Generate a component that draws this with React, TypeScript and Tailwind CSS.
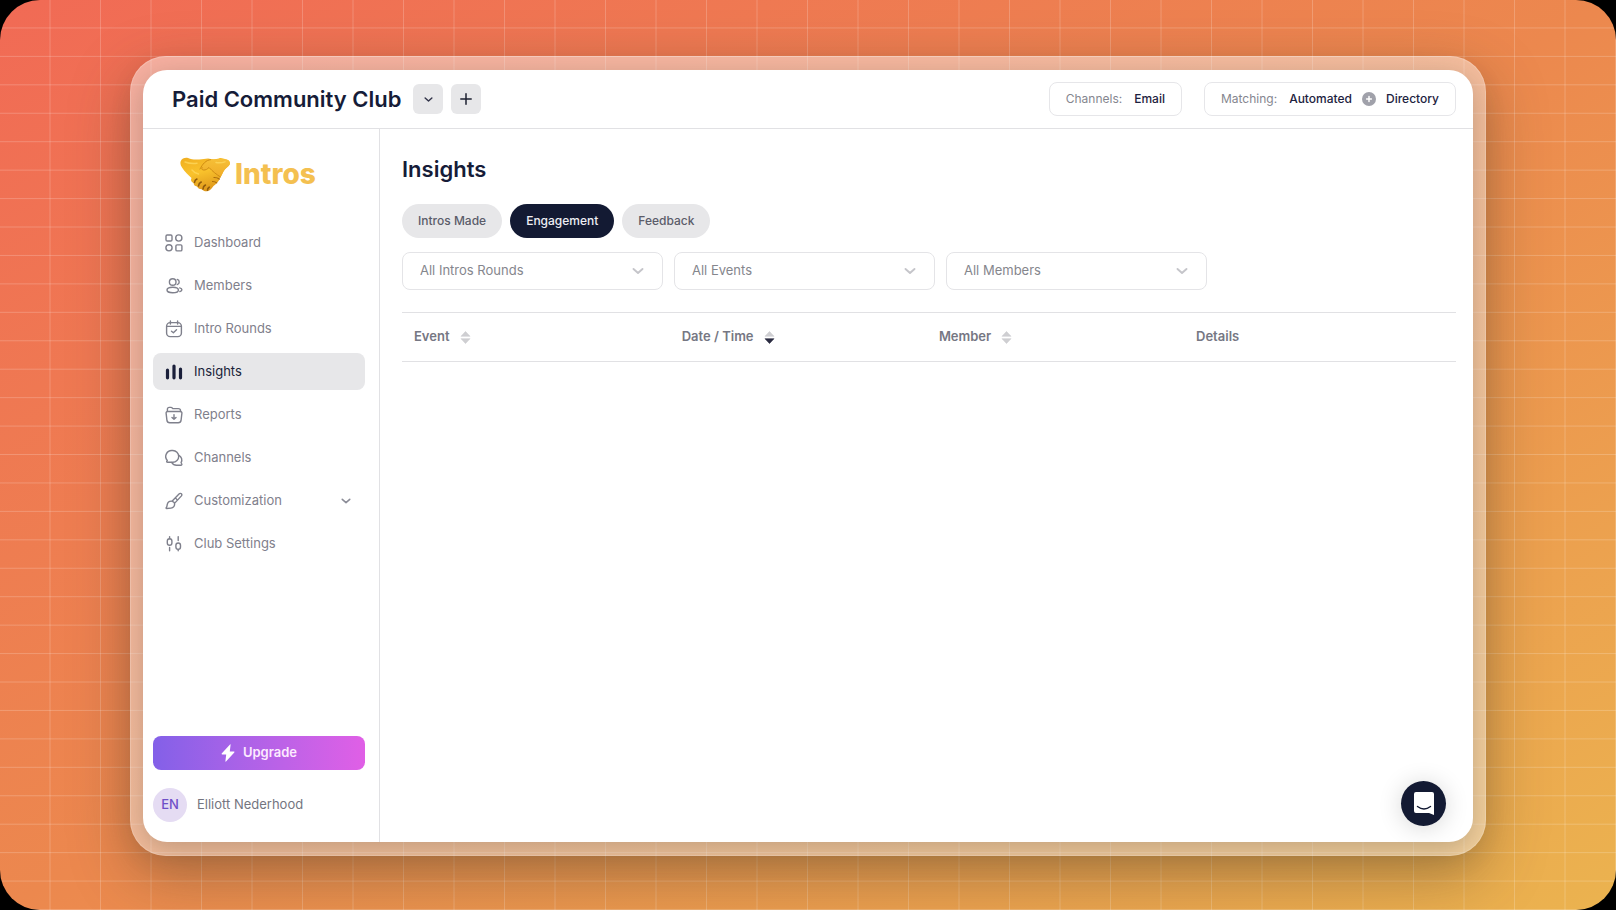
import type { ReactNode } from "react";
import clsx from "clsx";

function Icon({ children }: { children: ReactNode }) {
  return (
    <svg
      viewBox="0 0 18 18"
      className="size-[18px] shrink-0"
      fill="none"
      stroke="currentColor"
      strokeWidth="1.4"
      strokeLinecap="round"
      strokeLinejoin="round"
      aria-hidden="true"
    >
      {children}
    </svg>
  );
}

const navItems: { label: string; icon: ReactNode; active?: boolean; expandable?: boolean }[] = [
  {
    label: "Dashboard",
    icon: (
      <Icon>
        <rect x="1" y="1" width="6" height="6" rx="1.2" />
        <circle cx="13.8" cy="4" r="3.1" />
        <circle cx="4" cy="13.8" r="3.1" />
        <rect x="10.9" y="10.9" width="6" height="6" rx="1.2" />
      </Icon>
    ),
  },
  {
    label: "Members",
    icon: (
      <Icon>
        <circle cx="7.7" cy="5" r="3.3" />
        <ellipse cx="7.7" cy="13" rx="5.7" ry="2.8" />
        <path d="M12.200 2.400c1.300.3 2 1.300 2 2.600s-.7 2.300-2 2.600M14.700 10.900c1.400.3 2.200.9 2.200 1.800s-.8 1.500-2 1.800" />
      </Icon>
    ),
  },
  {
    label: "Intro Rounds",
    icon: (
      <Icon>
        <rect x="1.600" y="2.600" width="14.800" height="14" rx="3.600" />
        <path d="M5.400 1v3M12.600 1v3M1.800 6.400h14.400M6.500 11.200l1.900 1.500 3.100-2.900" />
      </Icon>
    ),
  },
  {
    label: "Insights",
    active: true,
    icon: (
      <Icon>
        <path d="M2.500 7.200v7.600M9 3v11.800M15.500 6v8.800" strokeWidth="3.200" />
      </Icon>
    ),
  },
  {
    label: "Reports",
    icon: (
      <Icon>
        <path d="M1.100 7.200c-.1-1 .6-1.700 1.600-1.700h12.600c1 0 1.700.700 1.600 1.700l-.8 7c-.2 1.600-1.300 2.600-2.900 2.600H4.800c-1.600 0-2.700-1-2.900-2.600z" />
        <path d="M2.400 5.400V3.200c0-1 .7-1.800 1.800-1.800h1.700c.6 0 1.100.2 1.500.7l.4.5h5.500c1.300 0 2.200.800 2.200 2v.9M9 8.600v4.600M7 11.400l2 1.900 2-1.900" />
      </Icon>
    ),
  },
  {
    label: "Channels",
    icon: (
      <Icon>
        <path d="M7.200 1.500h.6a5.900 5.900 0 1 1 0 11.800H2.700c-1 0-1.300-.6-.7-1.300l.3-.5A6 6 0 0 1 7.200 1.500z" />
        <path d="M13.900 6.300c2.700 1.400 3.700 4.700 2.200 7.300l.5.900c.6 1 .2 1.700-.8 1.700h-4.300c-2 0-3.700-.9-4.700-2.600" />
      </Icon>
    ),
  },
  {
    label: "Customization",
    expandable: true,
    icon: (
      <Icon>
        <path d="M7 9.200 14 2.100c.8-.8 1.800-.9 2.400-.3s.5 1.500-.2 2.300L9.500 11.400M7 9.200c1.200.2 2.300 1.200 2.500 2.200.5 2.500-1.200 4.500-3.500 4.700l-4.400.4c-.5 0-.7-.4-.4-.8.900-.9.800-2 1-3 .4-2.100 2.100-3.800 4.800-3.500zM10.400 5.900l2 2.200" />
      </Icon>
    ),
  },
  {
    label: "Club Settings",
    icon: (
      <Icon>
        <rect x="2.300" y="3.800" width="4.600" height="6.400" rx="2.300" />
        <rect x="10.900" y="8" width="4.600" height="6.400" rx="2.300" />
        <path d="M4.600 1.600v2.100M4.600 12.400v3.400M13.200 1.600v4M13.200 14.500v1.300" />
      </Icon>
    ),
  },
];

function Chevron({ className }: { className: string }) {
  return (
    <svg viewBox="0 0 12 12" className={className} fill="none" stroke="currentColor" strokeWidth="1.900" strokeLinecap="round" strokeLinejoin="round" aria-hidden="true">
      <path d="M1.500 4 6 8l4.500-4" />
    </svg>
  );
}

function Handshake() {
  return (
    <svg viewBox="0 0 50 35" className="h-[35px] w-[50px]" aria-hidden="true">
      <defs>
        <linearGradient id="skinLeft" x1="0" y1="0" x2="0.4" y2="1">
          <stop offset="0" stopColor="#f0ae20" />
          <stop offset="0.5" stopColor="#f9c22c" />
          <stop offset="1" stopColor="#e09a1c" />
        </linearGradient>
        <linearGradient id="skinRight" x1="0" y1="0" x2="0" y2="1">
          <stop offset="0" stopColor="#f6c037" />
          <stop offset="1" stopColor="#f0ac28" />
        </linearGradient>
      </defs>
      <path d="M.8 4C2 1.500 5 .3 8 1c3.500 1.300 7 2 11 1.400 4 0 6-.6 9-.8 3.500.6 7 1 11-.2 2.500-1 4 .5 6.500.8 3 .3 5 2.500 4.300 5-1 2.300-3.500 3.300-5 5.300-2 2.800-2.800 5.500-4.800 8.500-1.500 4-4 6-6.500 8-1.500 2-3 4.500-5.500 5-2.500.8-4.500-.2-6.500-1.800-2.500 0-3.500-1.200-4.500-2.700-2.200-.3-3.200-1.500-3.500-3.500-2.500-1-3-3-2-5C8.500 18 4.500 14.500 2 10.500.5 8 0 6 .8 4z" fill="url(#skinLeft)" />
      <path d="M22 10.500c2-4 5-7.500 9-8 3.500.3 6 0 9-1.100 3 0 3.500.8 5.500.8 3 .3 5 2.500 4.300 5-1 2.300-3.500 3.300-5 5.300-1.800 2.500-2.500 4.700-4 7.300-4-2.500-8-5.500-11.800-9.500-2 1.500-4 3-6 2.500-1.300-.3-1.500-1.300-1-2.300z" fill="url(#skinRight)" />
      <path d="M20 12c2.500-5 6-9 10.500-9.300M22 10.500c-.7 1.400 0 2.300 1.300 2.500 2.500.3 4-1 5.700-2.500 3.700 4 7.500 7 11.500 9.500" fill="none" stroke="#c98612" strokeWidth="0.900" strokeLinecap="round" />
      <path d="M14.500 25.500c.2-1.600 1.100-2.800 2.400-3.400M18.500 29c.2-1.900 1.200-3.300 2.700-4M23 32c.1-1.800 1-3.300 2.400-4M27.500 33.300c0-1.300.6-2.500 1.700-3.100" fill="none" stroke="#8f5a0c" strokeWidth="1.600" strokeLinecap="round" />
      <path d="M34 20.500c2 0 4 .4 5.300 1.500M32.500 24.500c1.700 0 3.200.4 4.200 1.400" fill="none" stroke="#a86a0c" strokeWidth="1.200" strokeLinecap="round" />
      <path d="M5 5c3 1.200 7 1.800 12 1.300M36 5.500c3 .5 6 .3 9-.7M12 13c2 2.500 4 3.500 6.500 4" fill="none" stroke="#ffdb62" strokeWidth="1.400" strokeLinecap="round" opacity="0.700" />
    </svg>
  );
}

function Sidebar() {
  return (
    <aside className="flex w-[237px] shrink-0 flex-col border-r border-[#e1e1e4] pr-3.5 pb-5 pl-2.5">
      <a href="#home" className="mt-[27px] ml-[27px] flex items-center gap-[5px]">
        <Handshake />
        <span className="text-[28px] leading-9 font-extrabold text-[#f4c050]">Intros</span>
      </a>
      <nav className="mt-8 flex flex-col gap-1.5" aria-label="Main">
        {navItems.map((item) => (
          <a
            key={item.label}
            href="#section"
            aria-current={item.active ? "page" : undefined}
            className={clsx(
              "flex h-[37px] items-center gap-[11px] rounded-lg pr-3.5 pl-3 text-[13px]",
              item.active ? "bg-[#e7e7e9] text-[#1a1f3a]" : "text-[#7f808c]",
            )}
          >
            {item.icon}
            <span className="flex-1">{item.label}</span>
            {item.expandable && <Chevron className="size-2.5 text-[#8b8c97]" />}
          </a>
        ))}
      </nav>
      <button className="mt-auto flex h-[34px] items-center justify-center gap-2 rounded-lg bg-linear-to-r from-[#8360e8] to-[#e05fe6] text-[13px] font-semibold text-[#fdeaff]">
        <svg viewBox="0 0 14 18" className="h-[18px] w-3.5" fill="white" aria-hidden="true">
          <path d="M9 .4.700 9.600c-.3.400-.1.900.4.900H5.200L4.400 17.300c0 .5.300.6.600.3l8.300-9.200c.3-.4.100-.9-.4-.9H8.800L9.600.8C9.700.2 9.300.1 9 .4z" />
        </svg>
        Upgrade
      </button>
      <div className="mt-[18px] flex items-center gap-2.5">
        <span className="flex size-[34px] items-center justify-center rounded-full bg-[#e5dcf3] text-[13px] font-medium text-[#6f4fc8]">EN</span>
        <span className="text-[13px] text-[#74757f]">Elliott Nederhood</span>
      </div>
    </aside>
  );
}

function Header() {
  return (
    <header className="flex h-[59px] shrink-0 items-center border-b border-[#e1e1e4] pr-[17px] pl-[29px]">
      <h1 className="text-[22px] leading-7 font-semibold text-[#161c38]">Paid Community Club</h1>
      <button aria-label="Switch club" className="ml-3 flex size-[30px] items-center justify-center rounded-md bg-[#e7e7e9] text-[#33354a]">
        <Chevron className="size-[9px]" />
      </button>
      <button aria-label="Add club" className="ml-2 flex size-[30px] items-center justify-center rounded-md bg-[#e7e7e9] text-[#1d2030]">
        <svg viewBox="0 0 12 12" className="size-3" stroke="currentColor" strokeWidth="1.500" strokeLinecap="round" aria-hidden="true">
          <path d="M6 .8v10.400M.8 6h10.400" />
        </svg>
      </button>
      <div className="ml-auto flex items-center gap-[22px] text-[12px] font-medium text-[#1d2240]">
        <div className="flex h-[34px] items-center gap-3 rounded-lg border border-[#e6e6e9] px-4">
          <span className="font-normal text-[#85868f]">Channels:</span>
          <span>Email</span>
        </div>
        <div className="flex h-[34px] items-center rounded-lg border border-[#e6e6e9] px-4">
          <span className="font-normal text-[#85868f]">Matching:</span>
          <span className="ml-3">Automated</span>
          <svg viewBox="0 0 14 14" className="mx-2.5 size-3.5" aria-hidden="true">
            <circle cx="7" cy="7" r="7" fill="#a0a1aa" />
            <path d="M7 4.600v4.800M4.600 7h4.800" stroke="white" strokeWidth="1.500" strokeLinecap="round" />
          </svg>
          <span>Directory</span>
        </div>
      </div>
    </header>
  );
}

const tabs = ["Intros Made", "Engagement", "Feedback"];
const filters = ["All Intros Rounds", "All Events", "All Members"];
const columns: { label: string; width: string; sort?: "none" | "desc" }[] = [
  { label: "Event", width: "w-[25.4%]", sort: "none" },
  { label: "Date / Time", width: "w-[24.4%]", sort: "desc" },
  { label: "Member", width: "w-[24.4%]", sort: "none" },
  { label: "Details", width: "w-[25.8%]" },
];

function SortArrows({ desc }: { desc: boolean }) {
  return (
    <svg viewBox="0 0 11 13" className="h-[13px] w-[11px]" aria-hidden="true">
      <path d="M5.500.5 10 5.300H1z" fill="#cfcfd2" stroke="#cfcfd2" strokeWidth=".6" strokeLinejoin="round" />
      <path d="M5.500 12.500 10 7.700H1z" fill={desc ? "#2b2c42" : "#cfcfd2"} stroke={desc ? "#2b2c42" : "#cfcfd2"} strokeWidth=".6" strokeLinejoin="round" />
    </svg>
  );
}

function Content() {
  return (
    <main className="min-w-0 flex-1 pt-[26px] pr-[17px] pl-[22px]">
      <h2 className="text-[22px] leading-7 font-semibold text-[#161c38]">Insights</h2>
      <div className="mt-[21px] flex gap-2" role="tablist">
        {tabs.map((tab) => (
          <button
            key={tab}
            role="tab"
            aria-selected={tab === "Engagement"}
            className={clsx(
              "h-[34px] rounded-full px-4 text-[12px] font-medium",
              tab === "Engagement" ? "bg-[#131a33] text-[#eeeef4]" : "bg-[#e7e7e9] text-[#5b5c69]",
            )}
          >
            {tab}
          </button>
        ))}
      </div>
      <div className="mt-3.5 flex gap-[11px]">
        {filters.map((label) => (
          <div key={label} className="relative w-[261px]">
            <select
              aria-label={label}
              className="h-[38px] w-full appearance-none rounded-lg border border-[#e4e4e7] bg-white pr-10 pl-[17px] text-[13px] text-[#85868d]"
            >
              <option>{label}</option>
            </select>
            <Chevron className="pointer-events-none absolute top-[13px] right-[19px] size-3 text-[#c5c5ca]" />
          </div>
        ))}
      </div>
      <table className="mt-[22px] w-full table-fixed border-y border-[#e1e1e4] text-left">
        <thead>
          <tr className="h-[49px]">
            {columns.map((col) => (
              <th key={col.label} scope="col" className={clsx("px-3 text-[13px] font-semibold text-[#767783]", col.width)}>
                {col.sort ? (
                  <button className="flex items-center gap-2.5">
                    {col.label}
                    <SortArrows desc={col.sort === "desc"} />
                  </button>
                ) : (
                  col.label
                )}
              </th>
            ))}
          </tr>
        </thead>
      </table>
    </main>
  );
}

export default function App() {
  return (
    <div className="min-h-screen bg-black font-['Inter',sans-serif]">
      <div className="flex min-h-screen overflow-hidden rounded-[40px] bg-linear-to-br from-[#f16a55] via-[#ec884e] to-[#ebb34f]">
        <div className="flex flex-1 bg-[linear-gradient(to_left,rgba(255,255,255,0.2)_1px,transparent_1px),linear-gradient(to_top,rgba(255,255,255,0.2)_1px,transparent_1px)] bg-size-[3.125%_3.125%] px-[130px] pt-14 pb-[54px]">
          <div className="flex min-w-0 flex-1 rounded-[36px] bg-white/45 px-[13px] py-3.5 shadow-[0_20px_60px_rgba(70,60,40,0.4)] inset-ring inset-ring-white/20">
            <div className="relative flex min-w-0 flex-1 flex-col overflow-hidden rounded-3xl bg-white shadow-[0_8px_30px_rgba(70,60,40,0.3)]">
              <Header />
              <div className="flex flex-1">
                <Sidebar />
                <Content />
              </div>
              <button
                aria-label="Open chat"
                className="absolute right-[27px] bottom-4 flex size-[45px] items-center justify-center rounded-full bg-[#131a33] shadow-[0_2px_24px_rgba(0,0,0,0.16)]"
              >
                <svg viewBox="0 0 20 23" className="h-[23px] w-5" aria-hidden="true">
                  <path d="M2 0h16a2 2 0 0 1 2 2v21l-5-2H2a2 2 0 0 1-2-2V2a2 2 0 0 1 2-2z" fill="white" />
                  <path d="M3.500 14.500c4 3 9 3 13 0" stroke="#131a33" strokeWidth="1.400" strokeLinecap="round" fill="none" />
                </svg>
              </button>
            </div>
          </div>
        </div>
      </div>
    </div>
  );
}
